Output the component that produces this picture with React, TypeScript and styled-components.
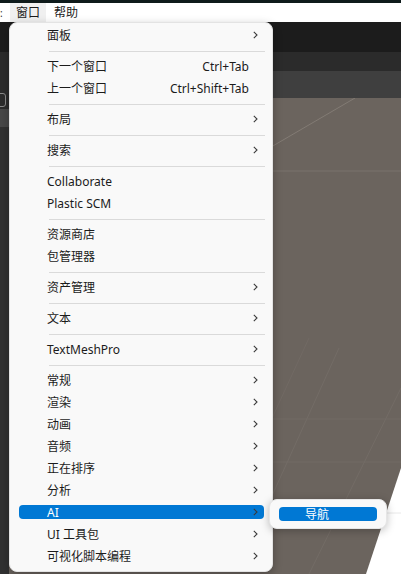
import * as React from "react";
import styled, { createGlobalStyle } from "styled-components";

const GlobalStyle = createGlobalStyle`
	html, body {
		margin: 0;
		padding: 0;
		background: #303030;
	}
	* {
		box-sizing: border-box;
	}
`;

const FONT = `"Noto Sans", "Noto Sans CJK SC", sans-serif`;

const Page = styled.div`
	position: relative;
	width: 401px;
	height: 574px;
	overflow: hidden;
	font-family: ${FONT};
	font-size: 12px;
	color: #1b1b1b;
	display: flex;
	flex-direction: column;
`;

const TopStrip = styled.div`
	height: 3px;
	background: #0f1b1b;
`;

const MenuBar = styled.div`
	height: 19px;
	background: #ffffff;
	display: flex;
	align-items: stretch;
`;

const MenuTitle = styled.div<{ $open?: boolean }>`
	display: flex;
	align-items: center;
	padding: 0 6px;
	background: ${(p) => (p.$open ? "#f0f0f0" : "transparent")};
	line-height: 1;
`;

const EdgeMark = styled.div`
	width: 10px;
	display: flex;
	align-items: center;
	font-size: 10px;
	line-height: 1;
	color: #333;
`;

const TabStrip = styled.div`
	height: 30px;
	background: #1c1c1c;
`;

const Toolbar = styled.div`
	height: 19px;
	background: #2b2b2b;
`;

const Body = styled.div`
	flex: 1;
	display: grid;
	grid-template-columns: 9px 1fr;
`;

const LeftColumn = styled.div`
	display: flex;
	flex-direction: column;
	background: #313131;
`;

const LeftHeader = styled.div`
	height: 19px;
	background: #2b2b2b;
	display: flex;
	align-items: center;
`;

const LeftBand = styled.div`
	height: 18px;
	background: #474747;
`;

const IconBox = styled.div`
	width: 14px;
	height: 14px;
	margin-left: -8px;
	border: 1px solid #8a8a8a;
	border-radius: 3px;
`;

const SceneColumn = styled.div`
	display: flex;
	flex-direction: column;
`;

const SceneBar = styled.div`
	height: 27px;
	background: #3f3f3f;
`;

const Scene = styled.div`
	flex: 1;
	background: #6b645e;
	svg {
		display: block;
	}
`;

const Dropdown = styled.div`
	position: absolute;
	left: 9px;
	top: 22px;
	width: 264px;
	padding: 1px 0 4px;
	background: #f9f9f9;
	border: 1px solid #e3e3e3;
	border-radius: 8px;
	box-shadow: 0 3px 10px rgba(0, 0, 0, 0.28);
`;

const Item = styled.div`
	padding: 4px 8px 4px 9px;
`;

const Row = styled.div<{ $active?: boolean }>`
	height: 14px;
	display: flex;
	align-items: center;
	padding: 0 6px 0 28px;
	border-radius: 4px;
	white-space: nowrap;
	background: ${(p) => (p.$active ? "#0078d4" : "transparent")};
	color: ${(p) => (p.$active ? "#ffffff" : "#1b1b1b")};
`;

const Label = styled.span`
	flex: 1;
`;

const Shortcut = styled.span`
	margin-right: 9px;
`;

const Separator = styled.div`
	margin: 5px 7px 3px 39px;
	height: 1px;
	background: #dadada;
`;

const Submenu = styled.div`
	position: absolute;
	left: 269px;
	top: 499px;
	width: 118px;
	padding: 7px 9px;
	background: #f9f9f9;
	border: 1px solid #e6e6e6;
	border-radius: 8px;
	box-shadow: 0 2px 8px rgba(0, 0, 0, 0.25);
`;

const SubRow = styled.div`
	height: 14px;
	display: flex;
	align-items: center;
	padding-left: 26px;
	border-radius: 4px;
	background: #0078d4;
	color: #ffffff;
`;

const Chevron = () => (
	<svg width="5" height="8" viewBox="0 0 5 8">
		<path d="M0.8 0.8 L4 4 L0.8 7.2" fill="none" stroke="#3a3a3a" strokeWidth="1.1" />
	</svg>
);

type Entry =
	| { kind: "sep" }
	| { kind: "item"; label: string; shortcut?: string; sub?: boolean; active?: boolean };

const entries: Entry[] = [
	{ kind: "item", label: "面板", sub: true },
	{ kind: "sep" },
	{ kind: "item", label: "下一个窗口", shortcut: "Ctrl+Tab" },
	{ kind: "item", label: "上一个窗口", shortcut: "Ctrl+Shift+Tab" },
	{ kind: "sep" },
	{ kind: "item", label: "布局", sub: true },
	{ kind: "sep" },
	{ kind: "item", label: "搜索", sub: true },
	{ kind: "sep" },
	{ kind: "item", label: "Collaborate" },
	{ kind: "item", label: "Plastic SCM" },
	{ kind: "sep" },
	{ kind: "item", label: "资源商店" },
	{ kind: "item", label: "包管理器" },
	{ kind: "sep" },
	{ kind: "item", label: "资产管理", sub: true },
	{ kind: "sep" },
	{ kind: "item", label: "文本", sub: true },
	{ kind: "sep" },
	{ kind: "item", label: "TextMeshPro", sub: true },
	{ kind: "sep" },
	{ kind: "item", label: "常规", sub: true },
	{ kind: "item", label: "渲染", sub: true },
	{ kind: "item", label: "动画", sub: true },
	{ kind: "item", label: "音频", sub: true },
	{ kind: "item", label: "正在排序", sub: true },
	{ kind: "item", label: "分析", sub: true },
	{ kind: "item", label: "AI", sub: true, active: true },
	{ kind: "item", label: "UI 工具包", sub: true },
	{ kind: "item", label: "可视化脚本编程", sub: true },
];

// scene grid, coordinates relative to the scene's top-left (x 9, y 98)
const SceneDrawing = () => (
	<svg width="392" height="476" viewBox="0 0 392 476">
		<line x1="346" y1="0" x2="120" y2="132" stroke="#827b74" strokeWidth="1" />
		<line x1="0" y1="73" x2="392" y2="73" stroke="#7a736c" strokeWidth="1" />
		<line x1="0" y1="321" x2="392" y2="321" stroke="#726b65" strokeWidth="1" />
		<line x1="0" y1="364" x2="392" y2="364" stroke="#726b65" strokeWidth="1" />
		<line x1="330" y1="250" x2="262" y2="400" stroke="#736c66" strokeWidth="1" />
		<line x1="392" y1="290" x2="300" y2="476" stroke="#736c66" strokeWidth="1" />
		<line x1="300" y1="240" x2="240" y2="370" stroke="#716a64" strokeWidth="1" />
		<polygon points="392,370 392,476 357,476" fill="#ffffff" />
		<line x1="360" y1="415" x2="392" y2="415" stroke="#e8e8e8" strokeWidth="1" />
	</svg>
);

export default function App() {
	return (
		<Page>
			<GlobalStyle />
			<TopStrip />
			<MenuBar>
				<EdgeMark>:</EdgeMark>
				<MenuTitle $open>窗口</MenuTitle>
				<MenuTitle style={{ marginLeft: 2 }}>帮助</MenuTitle>
			</MenuBar>
			<TabStrip />
			<Toolbar />
			<Body>
				<LeftColumn>
					<LeftHeader />
					<LeftHeader>
						<IconBox />
					</LeftHeader>
					<LeftBand />
				</LeftColumn>
				<SceneColumn>
					<SceneBar />
					<Scene>
						<SceneDrawing />
					</Scene>
				</SceneColumn>
			</Body>

			<Dropdown>
				{entries.map((e, i) =>
					e.kind === "sep" ? (
						<Separator key={i} />
					) : (
						<Item key={i}>
							<Row $active={e.active}>
								<Label>{e.label}</Label>
								{e.shortcut && <Shortcut>{e.shortcut}</Shortcut>}
								{e.sub && <Chevron />}
							</Row>
						</Item>
					)
				)}
			</Dropdown>

			<Submenu>
				<SubRow>导航</SubRow>
			</Submenu>
		</Page>
	);
}
